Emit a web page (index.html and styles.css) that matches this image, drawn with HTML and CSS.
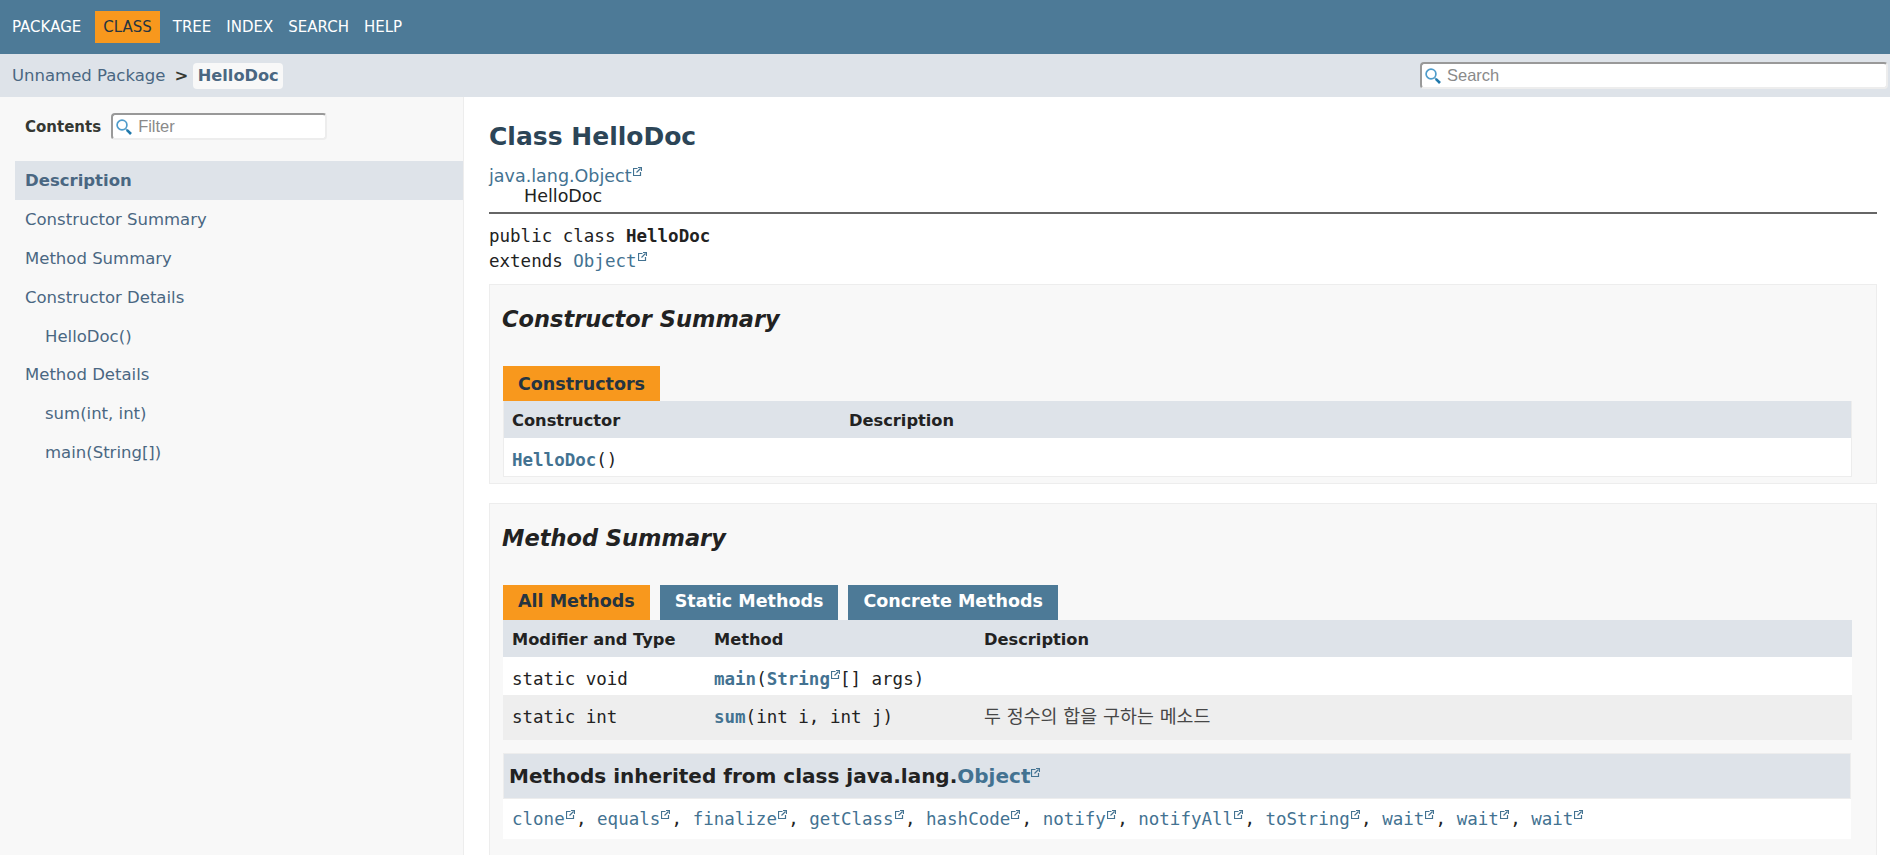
FILE: index.html
```html
<!DOCTYPE html>
<html lang="en">
<head>
    <meta charset="UTF-8">
    <meta name="viewport" content="width=device-width, initial-scale=1.0">
    <title>HelloDoc</title>
    <link rel="stylesheet" href="styles.css">
</head>
<body>
    <svg class="defs" width="0" height="0">
        <symbol id="ext" viewBox="0 0 9 9">
            <path d="M4.5 1.5H.5V8.5H7.5V5" fill="none" stroke="currentColor" stroke-width="1.2"/>
            <path d="M3.5 5.5L7.5 1.5M5 .5H8.5V4" fill="none" stroke="currentColor" stroke-width="1.2"/>
        </symbol>
        <symbol id="lens" viewBox="0 0 16 16">
            <circle cx="6" cy="6" r="4.9" fill="none" stroke="#4f9ccb" stroke-width="1.7"/>
            <path d="M9.5 9.5L11 11" stroke="#6fa9cc" stroke-width="1.4"/>
            <path d="M10.8 10.8L15 15" stroke="#1f78ab" stroke-width="2.6"/>
        </symbol>
    </svg>

    <header class="top-nav">
        <ul class="nav-list">
            <li>PACKAGE</li>
            <li class="nav-current">CLASS</li>
            <li>TREE</li>
            <li>INDEX</li>
            <li>SEARCH</li>
            <li>HELP</li>
        </ul>
    </header>

    <div class="sub-nav">
        <div class="crumbs">
            <a class="crumb-link">Unnamed Package</a>
            <span class="crumb-sep">&gt;</span>
            <a class="crumb-current">HelloDoc</a>
        </div>
        <div class="search-box search-top">
            <svg class="lens"><use href="#lens"/></svg>
            <input type="text" placeholder="Search">
        </div>
    </div>

    <div class="page">
        <nav class="sidebar">
            <div class="toc-head">
                <b>Contents</b>
                <div class="search-box search-filter">
                    <svg class="lens"><use href="#lens"/></svg>
                    <input type="text" placeholder="Filter">
                </div>
            </div>
            <ul class="toc">
                <li class="toc-current">Description</li>
                <li>Constructor Summary</li>
                <li>Method Summary</li>
                <li>Constructor Details</li>
                <li class="toc-sub">HelloDoc()</li>
                <li>Method Details</li>
                <li class="toc-sub">sum(int, int)</li>
                <li class="toc-sub">main(String[])</li>
            </ul>
        </nav>

        <main class="content">
            <h1 class="title">Class HelloDoc</h1>
            <div class="inherit">
                <a>java.lang.Object<svg class="ext"><use href="#ext"/></svg></a>
                <div class="inherit-child">HelloDoc</div>
            </div>
            <hr class="rule">
            <div class="signature">
                <div>public class <b>HelloDoc</b></div>
                <div>extends <a>Object<svg class="ext"><use href="#ext"/></svg></a></div>
            </div>

            <section class="summary">
                <h2>Constructor Summary</h2>
                <div class="tabs">
                    <span class="tab tab-active tab-single">Constructors</span>
                </div>
                <div class="rows rows-ctor">
                    <div class="cell head">Constructor</div>
                    <div class="cell head">Description</div>
                    <div class="cell code last-row"><a class="strong">HelloDoc</a>()</div>
                    <div class="cell last-row"></div>
                </div>
            </section>

            <section class="summary summary-methods">
                <h2>Method Summary</h2>
                <div class="tabs">
                    <span class="tab tab-active">All Methods</span>
                    <span class="tab">Static Methods</span>
                    <span class="tab">Concrete Methods</span>
                </div>
                <div class="rows rows-method">
                    <div class="cell head">Modifier and Type</div>
                    <div class="cell head">Method</div>
                    <div class="cell head">Description</div>

                    <div class="cell code">static void</div>
                    <div class="cell code"><a class="strong">main</a>(<a class="strong">String<svg class="ext"><use href="#ext"/></svg></a>[] args)</div>
                    <div class="cell"></div>

                    <div class="cell code alt">static int</div>
                    <div class="cell code alt"><a class="strong">sum</a>(int i, int j)</div>
                    <div class="cell alt korean">두 정수의 합을 구하는 메소드</div>
                </div>

                <div class="inherited">
                    <h3>Methods inherited from class java.lang.<a>Object<svg class="ext"><use href="#ext"/></svg></a></h3>
                    <div class="inherited-list">
                        <a>clone<svg class="ext"><use href="#ext"/></svg></a>,
                        <a>equals<svg class="ext"><use href="#ext"/></svg></a>,
                        <a>finalize<svg class="ext"><use href="#ext"/></svg></a>,
                        <a>getClass<svg class="ext"><use href="#ext"/></svg></a>,
                        <a>hashCode<svg class="ext"><use href="#ext"/></svg></a>,
                        <a>notify<svg class="ext"><use href="#ext"/></svg></a>,
                        <a>notifyAll<svg class="ext"><use href="#ext"/></svg></a>,
                        <a>toString<svg class="ext"><use href="#ext"/></svg></a>,
                        <a>wait<svg class="ext"><use href="#ext"/></svg></a>,
                        <a>wait<svg class="ext"><use href="#ext"/></svg></a>,
                        <a>wait<svg class="ext"><use href="#ext"/></svg></a>
                    </div>
                </div>
            </section>
        </main>
    </div>
</body>
</html>
```

FILE: styles.css
```css
html, body {
    height: 100%;
}
body {
    margin: 0;
    display: flex;
    flex-direction: column;
    overflow: hidden;
    background-color: #fff;
    color: #353833;
    font-family: "DejaVu Sans", sans-serif;
    font-size: 17.5px;
}
a {
    color: #437291;
}
.defs {
    display: block;
}
.ext {
    width: 9px;
    height: 9px;
    margin-left: 1px;
    vertical-align: 6px;
}

/* top bar */
.top-nav {
    height: 54px;
    flex: none;
    background-color: #4d7a97;
    color: #fff;
}
.nav-list {
    display: flex;
    align-items: center;
    gap: 15px;
    height: 53px;
    margin: 0;
    padding: 0 0 0 12px;
    list-style: none;
    font-size: 15px;
}
.nav-current {
    padding: 7px 8px;
    margin: 0 -2px 0 -1px;
    background-color: #f8981d;
    color: #253441;
}

.sub-nav {
    height: 43px;
    flex: none;
    display: flex;
    justify-content: space-between;
    align-items: center;
    padding: 0 2px 0 12px;
    background-color: #dee3e9;
    font-size: 16.5px;
}
.crumbs {
    display: flex;
    align-items: center;
    color: #4a6782;
}
.crumb-link {
    color: #4a6782;
}
.crumb-sep {
    margin: 0 5px 0 9px;
    color: #353833;
    font-weight: bold;
}
.crumb-current {
    padding: 3px 4.5px 4px;
    border-radius: 4px;
    background-color: #f8f8f8;
    color: #4a6782;
    font-size: 16.2px;
    font-weight: bold;
}

/* search inputs */
.search-box {
    display: flex;
    align-items: center;
    box-sizing: border-box;
    height: 27px;
    border: 2px solid #ededed;
    border-top-color: #999;
    border-left-color: #999;
    border-radius: 4px;
    background-color: #fff;
}
.search-box input {
    flex: 1;
    min-width: 0;
    border: none;
    outline: none;
    padding: 0;
    background: none;
    font-family: "Liberation Sans", sans-serif;
    font-size: 16.5px;
}
.search-box input::placeholder {
    color: #8a8a8a;
}
.lens {
    width: 16px;
    height: 16px;
    flex: none;
    margin: 0 6px 0 3px;
}
.search-top {
    width: 468px;
}
.search-filter {
    width: 216px;
}

/* sidebar */
.page {
    flex: 1;
    min-height: 0;
    display: flex;
}
.sidebar {
    width: 464px;
    flex: none;
    box-sizing: border-box;
    padding-left: 15px;
    border-right: 1px solid #ededed;
    background-color: #f8f8f8;
}
.toc-head {
    display: flex;
    align-items: center;
    gap: 10px;
    height: 27px;
    margin: 16px 0 21px 10px;
    font-size: 15px;
}
.toc {
    margin: 0;
    padding: 0;
    list-style: none;
    color: #4a6782;
    font-size: 16.5px;
}
.toc li {
    height: 38.9px;
    line-height: 40px;
    padding-left: 10px;
}
.toc .toc-sub {
    padding-left: 30px;
}
.toc .toc-current {
    background-color: #dee3e9;
    font-weight: bold;
}

/* main column */
.content {
    flex: 1;
    min-width: 0;
    padding: 0 13px 0 25px;
}
.title {
    margin: 24px 0 0;
    color: #2c4557;
    font-size: 25px;
    line-height: 32px;
}
.inherit {
    margin-top: 13px;
    line-height: 20px;
    color: #222;
}
.inherit-child {
    padding-left: 35px;
}
.rule {
    height: 2px;
    margin: 6px 0 0;
    border: none;
    background-color: #666;
}
.signature {
    margin-top: 10px;
    font-family: "DejaVu Sans Mono", monospace;
    font-size: 17.5px;
    line-height: 25px;
    color: #222;
}
.summary {
    margin-top: 10px;
    padding: 0 24px 6px 12px;
    border: 1px solid #ededed;
    background-color: #f8f8f8;
}
.summary-methods {
    margin-top: 19px;
    padding-bottom: 60px;
}
.summary h2 {
    margin: 0;
    padding-top: 19px;
    height: 63px;
    box-sizing: border-box;
    color: #222;
    font-size: 22.5px;
    font-style: italic;
    line-height: 30px;
}
.tabs {
    display: flex;
    gap: 10px;
    margin-left: 1px;
    margin-top: 18px;
}
.tab {
    display: block;
    height: 35px;
    line-height: 33px;
    padding: 0 15px;
    background-color: #4d7a97;
    color: #fff;
    font-size: 17.5px;
    font-weight: bold;
}
.tab-active {
    background-color: #f8981d;
    color: #253441;
}
.tab-single {
    line-height: 37px;
}
.rows {
    display: grid;
    margin-left: 1px;
    background-color: #fff;
}
.rows-ctor {
    grid-template-columns: 337px 1fr;
    border: 1px solid #ededed;
    border-top: none;
}
.rows-ctor .cell {
    padding-left: 8px;
}
.rows-method {
    grid-template-columns: 202px 270px 1fr;
}
.cell {
    box-sizing: border-box;
    height: 38px;
    padding: 0 9px;
    line-height: 38px;
    color: #222;
}
.head {
    height: 37px;
    line-height: 40px;
    background-color: #dee3e9;
    font-size: 16.25px;
    font-weight: bold;
}
.code {
    font-family: "DejaVu Sans Mono", monospace;
    font-size: 17.5px;
    line-height: 44px;
}
.strong {
    font-weight: bold;
}
.alt {
    height: 45px;
    background-color: #eeeeee;
}
.korean {
    font-family: "DejaVu Sans", "Noto Sans CJK KR", sans-serif;
    font-size: 18.4px;
    line-height: 44px;
    color: #474747;
}
.inherited {
    margin: 13px 1px 0 1px;
    background-color: #fff;
}
.inherited h3 {
    margin: 0;
    height: 46px;
    padding: 0 5px;
    box-sizing: border-box;
    border: 1px solid #ededed;
    background-color: #dee3e9;
    color: #222;
    font-size: 20px;
    line-height: 44px;
}
.inherited-list {
    padding: 0 9px;
    height: 40px;
    line-height: 40px;
    font-family: "DejaVu Sans Mono", monospace;
    font-size: 17.5px;
    color: #222;
}
.inherited-list .ext {
    margin-right: 1.3px;
}
```
